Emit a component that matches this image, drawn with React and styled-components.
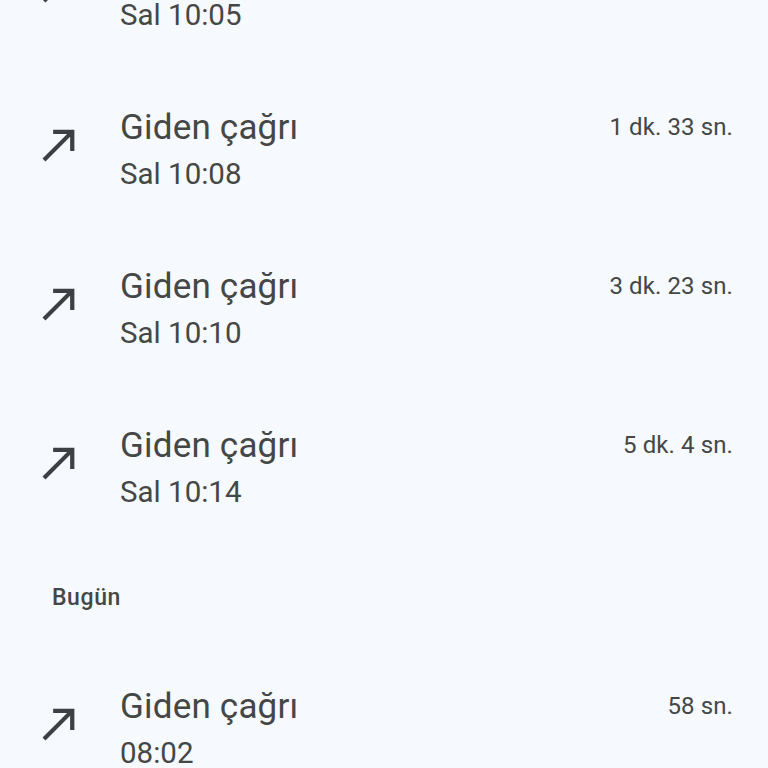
import * as React from 'react';
import styled, { createGlobalStyle } from 'styled-components';

const GlobalStyle = createGlobalStyle`
  html, body {
    margin: 0;
    padding: 0;
    background: #f6f9fd;
    font-family: Roboto, "Noto Sans", "Liberation Sans", sans-serif;
    overflow: hidden;
  }
`;

const Screen = styled.div`
  width: 768px;
  height: 768px;
  overflow: hidden;
  background: #f6f9fd;
  color: #444746;
`;

// the list is scrolled: first entry sits partly above the top edge
const List = styled.div`
  display: flex;
  flex-direction: column;
  margin-top: -88px;
`;

const Row = styled.div`
  height: 159px;
  display: flex;
  align-items: center;
  padding: 0 35px 0 34px;
  box-sizing: border-box;
`;

const IconBox = styled.div`
  width: 51px;
  height: 51px;
  flex: none;
  margin-right: 35px;
  margin-top: -13px;
  color: #3c4043;

  & > svg {
    display: block;
  }
`;

const Body = styled.div`
  flex: 1;
  display: flex;
  flex-direction: column;
`;

const TopLine = styled.div`
  display: flex;
  align-items: center;
  justify-content: space-between;
  height: 47px;
`;

const Title = styled.div`
  font-size: 35px;
  letter-spacing: 0.2px;
`;

const Duration = styled.div`
  font-size: 24px;
  letter-spacing: 0.1px;
`;

const Sub = styled.div`
  font-size: 29.5px;
  line-height: 47px;
`;

const Header = styled.div`
  height: 102px;
  padding: 36px 0 0 52px;
  box-sizing: border-box;
  font-size: 23px;
  font-weight: 500;
  letter-spacing: 0.6px;
  color: #444746;
`;

const Arrow = () => (
  <svg width="51" height="51" viewBox="0 0 24 24" fill="currentColor">
    <path d="M9 5v2h6.59L4 18.59 5.41 20 17 8.41V15h2V5z" />
  </svg>
);

const Call = ({ time, duration }) => (
  <Row>
    <IconBox>
      <Arrow />
    </IconBox>
    <Body>
      <TopLine>
        <Title>Giden çağrı</Title>
        <Duration>{duration}</Duration>
      </TopLine>
      <Sub>{time}</Sub>
    </Body>
  </Row>
);

const App = () => (
  <Screen>
    <GlobalStyle />
    <List>
      <Call time="Sal 10:05" duration="" />
      <Call time="Sal 10:08" duration="1 dk. 33 sn." />
      <Call time="Sal 10:10" duration="3 dk. 23 sn." />
      <Call time="Sal 10:14" duration="5 dk. 4 sn." />
      <Header>Bugün</Header>
      <Call time="08:02" duration="58 sn." />
    </List>
  </Screen>
);

export default App;
